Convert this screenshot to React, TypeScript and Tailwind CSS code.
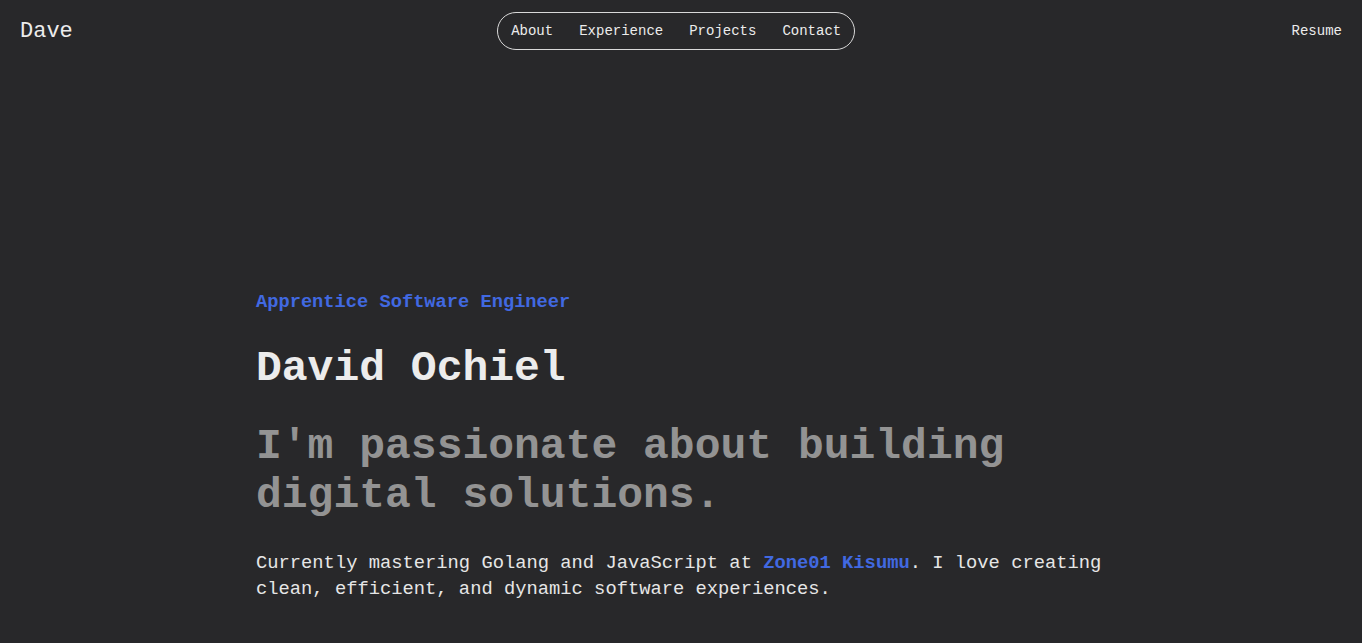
import React from "react";

export default function App() {
  return (
    <div
      className="min-h-screen bg-[#28282a] text-[#e6e6e6]"
      style={{ fontFamily: '"Liberation Mono", "DejaVu Sans Mono", monospace' }}
    >
      <nav className="flex items-start justify-between px-5 pt-3">
        <a className="text-[22px] leading-[40px] text-[#ececec]">Dave</a>
        <ul className="flex items-center rounded-full border border-[#d9d9d9] py-2 text-sm leading-5 text-[#ececec]">
          <li className="px-[13px]">About</li>
          <li className="px-[13px]">Experience</li>
          <li className="px-[13px]">Projects</li>
          <li className="px-[13px]">Contact</li>
        </ul>
        <a className="pl-3 text-sm leading-[38px] text-[#ececec]">Resume</a>
      </nav>

      <section className="mx-auto max-w-[850px] pt-[236px]">
        <h3 className="text-[18.72px] font-bold leading-[28px] text-[#4169e1]">
          Apprentice Software Engineer
        </h3>
        <h1 className="mt-[28px] text-[43px] font-bold leading-[50px] text-[#ececec]">
          David Ochiel
        </h1>
        <h2 className="mt-[28px] text-[43px] font-bold leading-[49px] text-[#939393]">
          I'm passionate about building digital solutions.
        </h2>
        <p className="mt-[30px] text-[18.8px] leading-[26px] text-[#e6e6e6]">
          Currently mastering Golang and JavaScript at{" "}
          <span className="font-bold text-[#4169e1]">Zone01 Kisumu</span>. I love
          creating clean, efficient, and dynamic software experiences.
        </p>
      </section>
    </div>
  );
}
